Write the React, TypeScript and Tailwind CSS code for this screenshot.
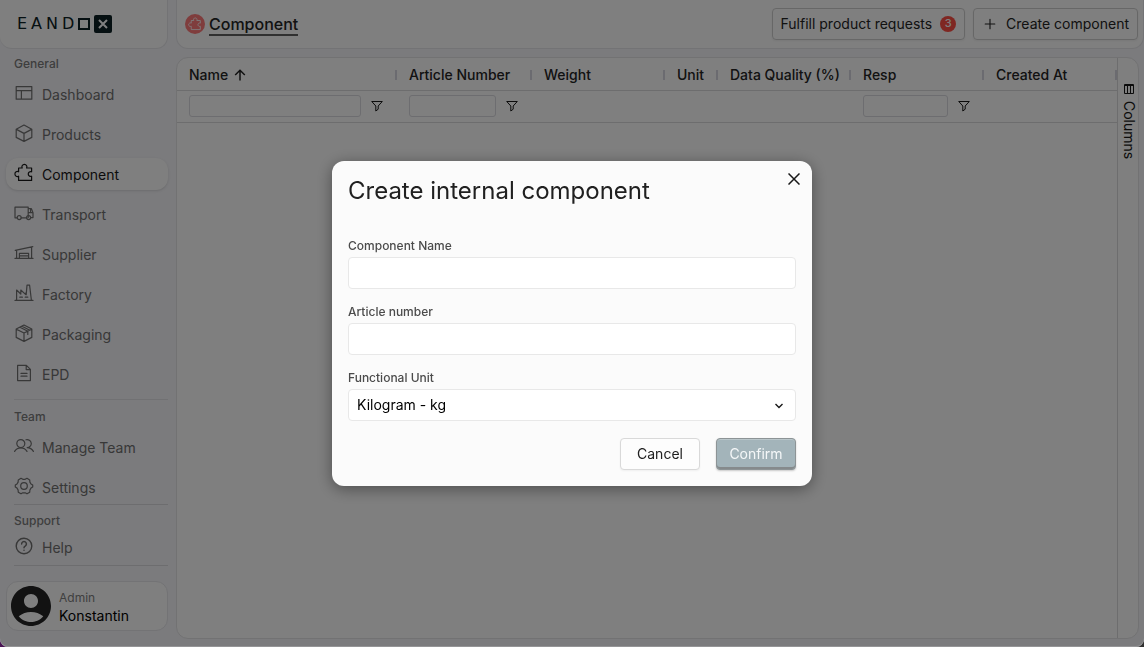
import type { ReactNode } from "react";
import { MdAccountCircle } from "react-icons/md";

function Icon({ children, className = "size-5" }: { children: ReactNode; className?: string }) {
  return (
    <svg
      viewBox="0 0 20 20"
      className={`shrink-0 ${className}`}
      fill="none"
      stroke="currentColor"
      strokeWidth="1.2"
      strokeLinecap="round"
      strokeLinejoin="round"
      aria-hidden="true"
    >
      {children}
    </svg>
  );
}

const puzzle = (
  <path d="M4.6 17.4v-4.2a2.5 2.5 0 1 1 0-4.4V5h3.6a2.5 2.5 0 1 1 4.4 0h5v3.8a2.4 2.4 0 1 0 0 4.4v4.2Z" />
);

const general = [
  {
    name: "Dashboard",
    icon: <path d="M2.2 3.6h15.6v12.6H2.2ZM2.2 7.6h15.6M7.4 7.6v8.6" />,
  },
  {
    name: "Products",
    icon: <path d="M10 2l7.8 4.2v8.2L10 18.4l-7.8-4V6.2ZM2.4 6.4L10 10.4l7.6-4M10 10.4v8" />,
  },
  { name: "Component", icon: puzzle, active: true },
  {
    name: "Transport",
    icon: (
      <>
        <path d="M3.2 14.8H1V4.2h13.2v10.4M14.2 5.6h3.2l1.600 4v5h-2.200M7.200 14.800h5.400M14.200 9.600H19M16.600 5.800v3.800" />
        <circle cx="5.2" cy="14.6" r="2" />
        <circle cx="14.6" cy="14.6" r="2" />
      </>
    ),
  },
  {
    name: "Supplier",
    icon: <path d="M1 15.4h18M2.6 15.4V7.2M17.6 15.4V4M1.2 7.4L18.8 3.6M5.4 15.4v-5h9.2v5M5.4 12.8h9.2" />,
  },
  {
    name: "Factory",
    icon: (
      <path d="M1 17.4h18M2.6 17.4V7l4.2 4V7l5 4.6M12.200 11.600l.800-9.400h2.600l1.800 15.200M11.8 11.6v-1.800M5.8 14.2h2.6M11.2 14.2h2.6" />
    ),
  },
  {
    name: "Packaging",
    icon: (
      <path d="M10 2l7.8 4v8.4L10 18.4l-7.8-4V6ZM2.4 6.2L10 10l7.6-3.8M10 10v8.2M6 4.2l7.8 4v3.2M8 3.2l7.8 4" />
    ),
  },
  {
    name: "EPD",
    icon: <path d="M3.6 2.4h8.8l4 4v11.2H3.6ZM12.2 2.6v4h4M7 10.4h6M7 13.2h6" />,
  },
];

const team = [
  {
    name: "Manage Team",
    icon: (
      <>
        <circle cx="6.8" cy="7.6" r="4" />
        <path d="M.6 15.4C2 13 4.2 11.8 6.8 11.8s4.8 1.2 6.2 3.6M12 3.8a4 4 0 1 1 1.2 7.8c2.6 0 4.8 1.4 6.2 3.8" />
      </>
    ),
  },
  {
    name: "Settings",
    icon: (
      <>
        <circle cx="10" cy="10" r="3.3" />
        <path d="M7 2.3l1.8 1h2.4l1.8-1 2.7 1.6.2 2.2 1.1 1.9 1.7 1v2l-1.7 1.1-1.1 1.9-.2 2.2-2.7 1.6-1.8-1H8.8l-1.8 1-2.7-1.6-.2-2.2L3 12.1 1.3 11V9L3 8l1.1-1.9.2-2.2Z" />
      </>
    ),
  },
];

const support = [
  {
    name: "Help",
    icon: (
      <>
        <circle cx="10" cy="10" r="7.8" strokeWidth="1.4" />
        <path d="M7.6 8a2.4 2.4 0 1 1 3.6 2.1c-.8.5-1.2.9-1.2 1.7M10 14.2v.1" strokeWidth="1.5" />
      </>
    ),
  },
];

function NavItem({ name, icon, active }: { name: string; icon: ReactNode; active?: boolean }) {
  return (
    <a
      href="#"
      aria-current={active ? "page" : undefined}
      className={`ml-1.5 flex h-8 items-center gap-2 rounded-xl pt-0.5 pl-2 text-sm ${
        active ? "bg-[#fefefe] text-[#181818] shadow-sm" : "text-[#707070]"
      }`}
    >
      <span className="-mt-1 flex">
        <Icon>{icon}</Icon>
      </span>
      {name}
    </a>
  );
}

function SectionTitle({ children }: { children: ReactNode }) {
  return <h2 className="pl-3.5 text-xs leading-4 font-medium text-[#7c7c7c]">{children}</h2>;
}

function Funnel() {
  return (
    <button type="button" aria-label="Filter" className="text-[#181818]">
      <svg viewBox="0 0 12 12" className="size-3" fill="none" stroke="currentColor" strokeWidth="1" aria-hidden="true">
        <path d="M.5 1.500h11M1 1.800L4.800 6v5L7.200 9.200V6L11 1.800" />
      </svg>
    </button>
  );
}

const columns = [
  { name: "Name", width: "", filter: true, sorted: true },
  { name: "Article Number", width: "w-[135px]", filter: true },
  { name: "Weight", width: "w-[133px]" },
  { name: "Unit", width: "w-[53px]" },
  { name: "Data Quality (%)", width: "w-[133px]" },
  { name: "Resp", width: "w-[133px]", filter: true },
  { name: "Created At", width: "w-[133px]" },
];

function Field({ id, label }: { id: string; label: string }) {
  return (
    <div className="flex flex-col gap-[3px]">
      <label htmlFor={id} className="text-xs leading-4 font-medium text-[#4b4b4b]">
        {label}
      </label>
      <input id={id} className="h-8 rounded border border-[#e8e8e8] bg-white px-2 text-sm outline-none" />
    </div>
  );
}

function Sidebar() {
  return (
    <nav className="flex w-[168px] shrink-0 flex-col">
      <div className="flex h-[49px] items-center rounded-b-xl border-r border-b border-[#e6e6ea] bg-[#fefefe] pl-[17px]">
        <div
          className="flex items-center gap-1 font-['DejaVu_Sans',sans-serif] text-base leading-5 text-[#0c2024]"
          role="img"
          aria-label="Eandox"
        >
          <span>E</span>
          <span>A</span>
          <span>N</span>
          <span>D</span>
          <span className="size-3 border-2 border-current" />
          <span className="flex size-[18px] items-center justify-center rounded-xs bg-[#0c2024]">
            <svg viewBox="0 0 10 10" className="size-2.5" stroke="#fff" strokeWidth="2" aria-hidden="true">
              <path d="M1 1l8 8M9 1L1 9" />
            </svg>
          </span>
        </div>
      </div>
      <div className="mt-[7px]">
        <SectionTitle>General</SectionTitle>
      </div>
      <div className="mt-1.5 flex flex-col gap-2">
        {general.map((item) => (
          <NavItem key={item.name} {...item} />
        ))}
      </div>
      <hr className="mt-[9px] mb-[9px] ml-3.5 border-[#e2e2e6]" />
      <SectionTitle>Team</SectionTitle>
      <div className="mt-1.5 flex flex-col gap-2">
        {team.map((item) => (
          <NavItem key={item.name} {...item} />
        ))}
      </div>
      <hr className="mt-px mb-2 ml-3.5 border-[#dadade]" />
      <SectionTitle>Support</SectionTitle>
      <div className="mt-0.5">
        {support.map((item) => (
          <NavItem key={item.name} {...item} />
        ))}
      </div>
      <hr className="mt-0.5 ml-3.5 border-[#dadade]" />
      <div className="mt-[15px] ml-1.5 flex h-[50px] items-center rounded-xl border border-[#e6e6ea] bg-[#fefefe]">
        <MdAccountCircle className="size-12 shrink-0 text-[#242424]" aria-hidden="true" />
        <div className="pt-px pl-1">
          <p className="text-xs leading-[18px] text-[#808080]">Admin</p>
          <p className="text-sm leading-[18px] text-black">Konstantin</p>
        </div>
      </div>
    </nav>
  );
}

function Grid() {
  return (
    <section className="mr-[5px] mb-2 flex flex-1 overflow-hidden rounded-xl border border-[#e4e4e6] bg-[#fefefe]">
      <div className="min-w-0 flex-1">
        <table className="w-full table-fixed text-left text-sm text-[#242424]">
          <thead>
            <tr className="h-8 border-b border-[#dadadc]">
              {columns.map((c) => (
                <th key={c.name} className={`p-0 pt-0.5 font-medium whitespace-nowrap ${c.width}`}>
                  <div className="flex items-center justify-between pl-3">
                    <span className="flex items-center gap-1.5">
                      {c.name}
                      {c.sorted && (
                        <svg viewBox="0 0 12 12" className="size-3" fill="none" stroke="currentColor" strokeWidth="1.5" aria-label="ascending">
                          <path d="M6 11.500V1.200M1.200 6L6 1.200 10.800 6" />
                        </svg>
                      )}
                    </span>
                    <span className="h-2.5 w-0.5 bg-[#d6d6e0]" />
                  </div>
                </th>
              ))}
            </tr>
            <tr className="h-8 border-b border-[#dadadc]">
              {columns.map((c) => (
                <td key={c.name} className="p-0">
                  {c.filter && (
                    <div className="flex items-center gap-2.5 pr-3.5 pl-3">
                      <input
                        aria-label={`${c.name} filter`}
                        className="h-[22px] w-full min-w-0 rounded-[3px] border border-[#dadae0] bg-transparent px-1 outline-none"
                      />
                      <Funnel />
                    </div>
                  )}
                </td>
              ))}
            </tr>
          </thead>
        </table>
      </div>
      <div className="flex w-[21px] flex-col items-center border-l border-[#dadadc] pt-[25px] pl-0.5 text-[#181818]">
        <button type="button" className="flex flex-col items-center gap-1.5">
          <svg viewBox="0 0 12 12" className="size-3" fill="none" stroke="currentColor" strokeWidth="1" aria-hidden="true">
            <path d="M1.500 1.500h9v9h-9ZM1.500 2.500h9M4.500 3v7.500M7.500 3v7.500" />
          </svg>
          <span className="text-sm leading-5 [writing-mode:vertical-rl]">Columns</span>
        </button>
      </div>
    </section>
  );
}

function CreateDialog() {
  return (
    <div className="fixed inset-0 flex items-center justify-center rounded-b-lg bg-black/50 shadow-[inset_0_-1px_0_rgba(255,255,255,0.2)]">
      <form
        role="dialog"
        aria-labelledby="dialog-title"
        className="relative flex w-[480px] flex-col rounded-xl bg-[#fbfbfb] px-4 pt-3.5 pb-4 shadow-[0_3px_16px_rgba(0,0,0,0.4)]"
        onSubmit={(e) => e.preventDefault()}
      >
        <h1 id="dialog-title" className="text-2xl leading-8 text-[#202020]">
          Create internal component
        </h1>
        <button type="button" aria-label="Close" className="absolute top-3 right-3 flex text-[#181818]">
          <svg viewBox="0 0 12 12" className="size-3" stroke="currentColor" strokeWidth="1.5" aria-hidden="true">
            <path d="M.5.5l11 11M11.500.5l-11 11" />
          </svg>
        </button>
        <div className="mt-[31px] flex flex-col gap-[15px]">
          <Field id="component-name" label="Component Name" />
          <Field id="article-number" label="Article number" />
          <div className="flex flex-col gap-[3px]">
            <label htmlFor="unit" className="text-xs leading-4 font-medium text-[#4b4b4b]">
              Functional Unit
            </label>
            <div className="relative">
              <select
                id="unit"
                className="block h-8 w-full appearance-none rounded border border-[#e8e8e8] bg-white px-2 text-sm text-black outline-none"
              >
                <option>Kilogram - kg</option>
              </select>
              <svg
                viewBox="0 0 10 10"
                className="pointer-events-none absolute top-3 right-3 size-2.5"
                fill="none"
                stroke="#181818"
                strokeWidth="1.4"
                aria-hidden="true"
              >
                <path d="M1.500 3L5 6.500 8.500 3" />
              </svg>
            </div>
          </div>
        </div>
        <div className="mt-[17px] flex justify-end gap-4">
          <button type="button" className="h-8 w-20 rounded border border-[#d9d9d9] bg-[#fdfdfd] text-sm text-[#202020] shadow-xs">
            Cancel
          </button>
          <button
            type="submit"
            className="h-8 w-20 rounded border border-[#8d9496] bg-[#a3b4ba] text-sm text-[#f4f7f8] shadow-[inset_0_-2px_0_#858a8c,inset_0_1px_0_#b9c6ca,0_1px_2px_rgba(0,0,0,0.2)]"
          >
            Confirm
          </button>
        </div>
      </form>
    </div>
  );
}

export default function App() {
  return (
    <div className="min-h-screen bg-linear-to-r from-[#4a1454] to-[#303030] font-[Inter,sans-serif]">
      <div className="flex min-h-screen gap-2 overflow-hidden rounded-b-lg bg-[#f6f6fa]">
        <Sidebar />
        <main className="flex min-w-0 flex-1 flex-col gap-2">
          <header className="flex h-[49px] items-center rounded-b-xl border border-t-0 border-[#e6e6ea] bg-[#fefefe] pr-[5px] pl-2">
            <span className="flex size-5 items-center justify-center rounded-full bg-[#ff7a7a] text-white">
              <Icon className="size-3.5">{puzzle}</Icon>
            </span>
            <h1 className="ml-1 border-b-2 border-[#606060] pt-px text-base leading-5 font-medium text-[#242424]">Component</h1>
            <div className="ml-auto flex gap-2">
              <button
                type="button"
                className="flex h-8 items-center gap-2 rounded border border-[#cfcfcf] px-2 text-sm text-[#242424] shadow-xs"
              >
                Fulfill product requests
                <span className="flex size-4 items-center justify-center rounded-full bg-[#ff4f45] text-[11px] font-medium text-white">
                  3
                </span>
              </button>
              <button
                type="button"
                className="flex h-8 items-center gap-2 rounded border border-[#cfcfcf] px-2 text-sm text-[#242424] shadow-xs"
              >
                <Icon className="size-4">
                  <path d="M10 4v12M4 10h12" strokeWidth="1.4" />
                </Icon>
                Create component
              </button>
            </div>
          </header>
          <Grid />
        </main>
      </div>
      <CreateDialog />
    </div>
  );
}
